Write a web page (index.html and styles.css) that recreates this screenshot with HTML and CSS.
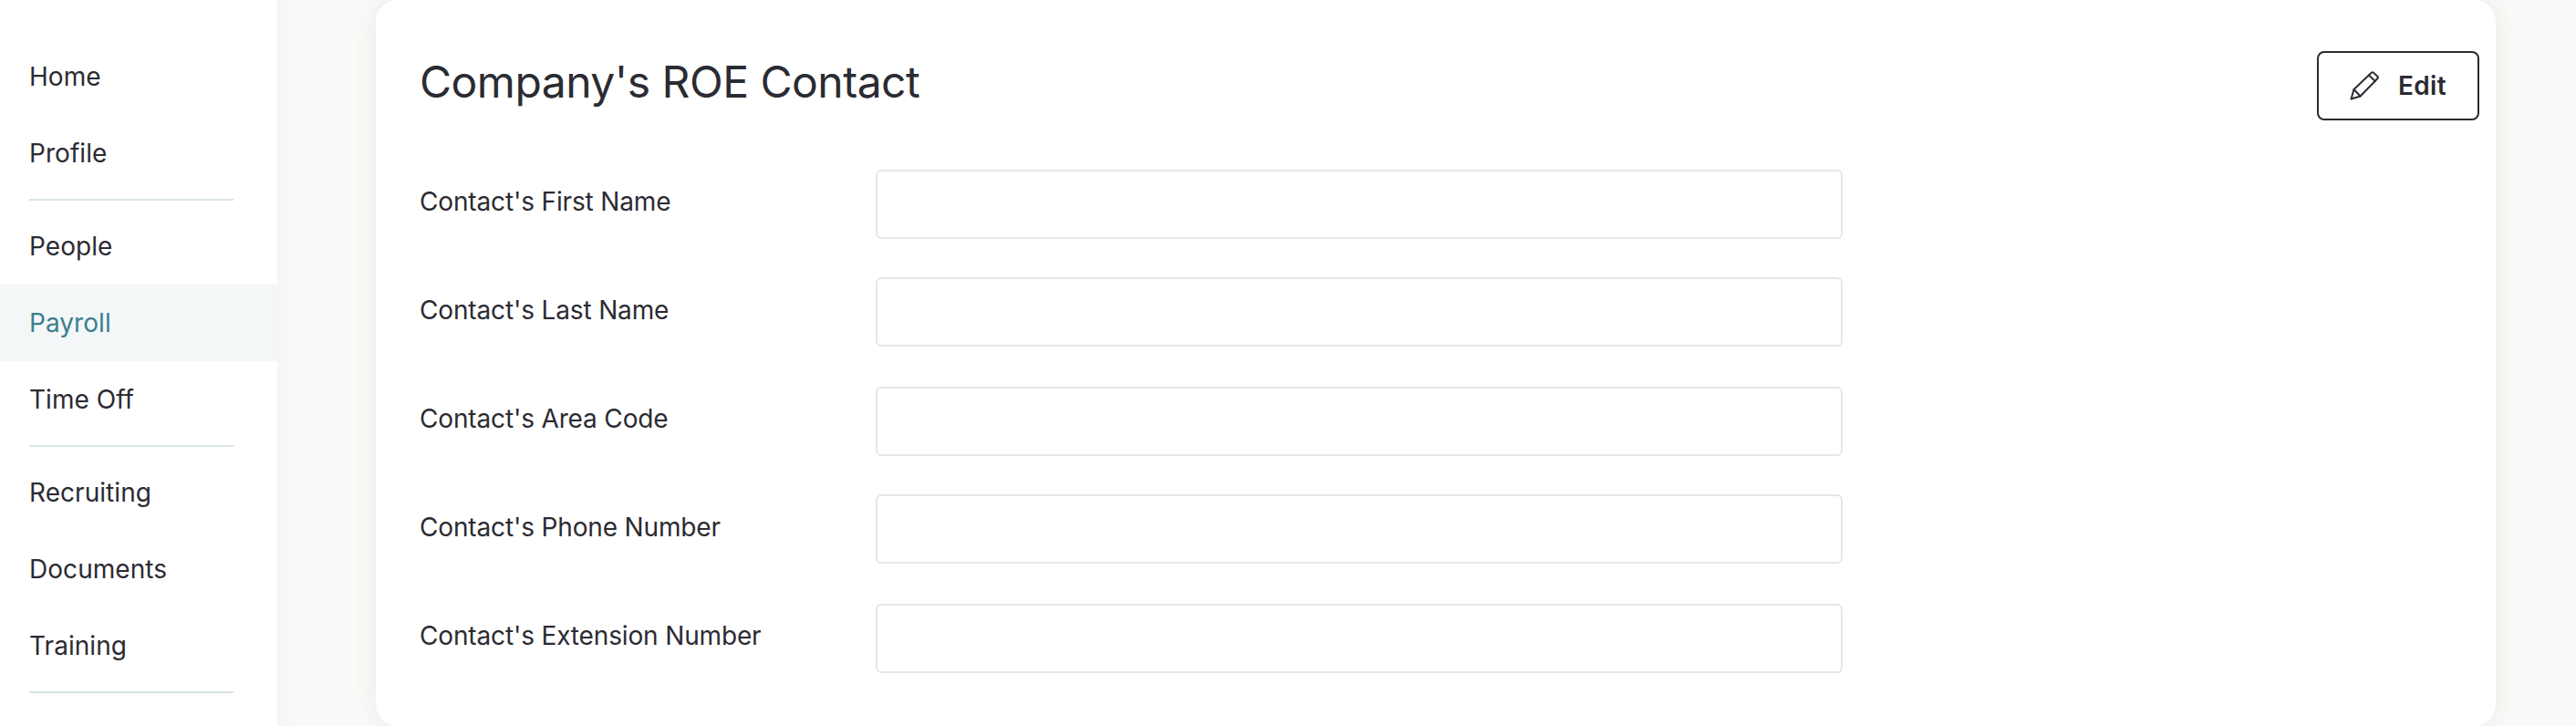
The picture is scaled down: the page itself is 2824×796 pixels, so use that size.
FILE: index.html
```html
<!DOCTYPE html>
<html lang="en">
<head>
<meta charset="utf-8">
<title>Company's ROE Contact</title>
<link rel="stylesheet" href="styles.css">
</head>
<body>
<div class="app">
  <nav class="sidebar">
    <a class="nav-item">Home</a>
    <a class="nav-item">Profile</a>
    <div class="nav-divider"></div>
    <a class="nav-item">People</a>
    <a class="nav-item active">Payroll</a>
    <a class="nav-item">Time Off</a>
    <div class="nav-divider"></div>
    <a class="nav-item">Recruiting</a>
    <a class="nav-item">Documents</a>
    <a class="nav-item">Training</a>
    <div class="nav-divider"></div>
  </nav>
  <main class="main">
    <section class="card">
      <header class="card-head">
        <h1 class="title">Company's ROE Contact</h1>
        <button class="edit-btn" type="button">
          <svg class="edit-icon" viewBox="0 0 32 32" fill="none" stroke="currentColor" stroke-width="2" stroke-linejoin="round" stroke-linecap="round">
            <path d="M1.5 30.5 L4.5 20 L24 1.5 Q25 0.8 26 1.6 L30.6 6 Q31.3 7 30.5 8 L11.5 27.5 Z"/>
            <path d="M4.5 20 L11.5 27.5"/>
            <path d="M21 4.5 L27.8 11"/>
          </svg>
          <span>Edit</span>
        </button>
      </header>
      <form class="form">
        <div class="row"><label class="label">Contact's First Name</label><input class="field" type="text"></div>
        <div class="row"><label class="label">Contact's Last Name</label><input class="field" type="text"></div>
        <div class="row"><label class="label">Contact's Area Code</label><input class="field" type="text"></div>
        <div class="row"><label class="label">Contact's Phone Number</label><input class="field" type="text"></div>
        <div class="row"><label class="label">Contact's Extension Number</label><input class="field" type="text"></div>
      </form>
    </section>
  </main>
</div>
</body>
</html>
```
FILE: styles.css
```css
* { box-sizing: border-box; }
html, body { margin: 0; height: 100%; overflow: hidden; }
body {
  font-family: Inter, "Liberation Sans", sans-serif;
  color: #2b2b32;
  background: #fbfaf8;
}
.app { display: flex; height: 796px; }
.sidebar {
  width: 304px;
  flex: none;
  background: #fff;
  padding-top: 42px;
  display: flex;
  flex-direction: column;
}
.nav-item {
  height: 84px;
  display: flex;
  align-items: center;
  padding-left: 32px;
  font-size: 28px;
  font-weight: 375;
  letter-spacing: 0.05px;
}
.nav-item.active { background: #f3f7f8; color: #3b7f8d; }
.nav-divider {
  height: 2px;
  margin: 8px 48px 8px 32px;
  background: #d9e5e6;
}
.main {
  flex: 1;
  padding-left: 108px;
  background: linear-gradient(90deg, #f6f5f3 0, #fbfaf8 24px);
}
.card {
  width: 2324px;
  height: 796px;
  background: #fff;
  border-radius: 24px;
  box-shadow: 0 0 28px rgba(60, 50, 40, 0.09);
  padding: 56px 18px 0 48px;
}
.card-head {
  display: flex;
  justify-content: space-between;
  align-items: flex-start;
  height: 130px;
}
.title {
  margin: 0;
  font-size: 48px;
  font-weight: 375;
  line-height: 68px;
  letter-spacing: -0.5px;
}
.edit-btn {
  width: 178px;
  height: 76px;
  display: flex;
  align-items: center;
  justify-content: center;
  gap: 21px;
  background: #fff;
  border: 2px solid #2b2b32;
  border-radius: 8px;
  font: 600 28px Inter, "Liberation Sans", sans-serif;
  letter-spacing: 0.4px;
  color: #2b2b32;
  padding: 0;
}
.edit-icon { width: 32px; height: 32px; }
.form { display: flex; flex-direction: column; }
.row { display: flex; align-items: center; height: 76px; margin-bottom: 42px; }
.row:nth-child(even) { margin-bottom: 44px; }
.label {
  width: 500px;
  font-size: 28px;
  font-weight: 375;
  letter-spacing: -0.15px;
  margin-top: -6px;
}
.row:nth-child(even) .label { margin-top: -4px; }
.field {
  width: 1060px;
  height: 76px;
  border: 2px solid #e4e7ec;
  border-radius: 6px;
  background: #fff;
  outline: none;
}
```
